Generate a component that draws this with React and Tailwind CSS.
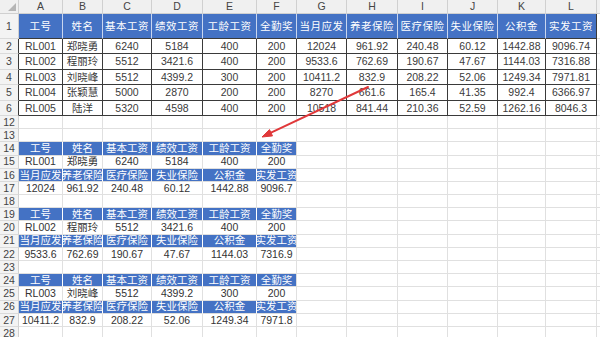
const COLS = ["A", "B", "C", "D", "E", "F", "G", "H", "I", "J", "K", "L"];

const HEAD1 = ["工号", "姓名", "基本工资", "绩效工资", "工龄工资", "全勤奖"];
const HEAD2 = ["当月应发", "养老保险", "医疗保险", "失业保险", "公积金", "实发工资"];

const TOP = [
  ["RL001", "郑晓勇", "6240", "5184", "400", "200", "12024", "961.92", "240.48", "60.12", "1442.88", "9096.74"],
  ["RL002", "程丽玲", "5512", "3421.6", "400", "200", "9533.6", "762.69", "190.67", "47.67", "1144.03", "7316.88"],
  ["RL003", "刘晓峰", "5512", "4399.2", "300", "200", "10411.2", "832.9", "208.22", "52.06", "1249.34", "7971.81"],
  ["RL004", "张颖慧", "5000", "2870", "200", "200", "8270", "661.6", "165.4", "41.35", "992.4", "6366.97"],
  ["RL005", "陆洋", "5320", "4598", "400", "200", "10518", "841.44", "210.36", "52.59", "1262.16", "8046.3"],
];

const SLIPS = [
  { a: ["RL001", "郑晓勇", "6240", "5184", "400", "200"], b: ["12024", "961.92", "240.48", "60.12", "1442.88", "9096.7"] },
  { a: ["RL002", "程丽玲", "5512", "3421.6", "400", "200"], b: ["9533.6", "762.69", "190.67", "47.67", "1144.03", "7316.9"] },
  { a: ["RL003", "刘晓峰", "5512", "4399.2", "300", "200"], b: ["10411.2", "832.9", "208.22", "52.06", "1249.34", "7971.8"] },
];

// build the sheet rows
const rows = [];
rows.push({ num: "1", kind: "head", cells: [...HEAD1, ...HEAD2] });
TOP.forEach((r, i) => rows.push({ num: String(i + 2), kind: "data", cells: r }));
rows.push({ num: "12", kind: "blank", cells: [] });
rows.push({ num: "13", kind: "blank", cells: [] });
let n = 14;
SLIPS.forEach((s) => {
  rows.push({ num: String(n++), kind: "bhead", cells: HEAD1 });
  rows.push({ num: String(n++), kind: "bdata", cells: s.a });
  rows.push({ num: String(n++), kind: "bhead", cells: HEAD2 });
  rows.push({ num: String(n++), kind: "bdata", cells: s.b });
  rows.push({ num: String(n++), kind: "blank", cells: [] });
});

const base = "flex items-center justify-center overflow-hidden whitespace-nowrap";

function cellClass(kind, ci, has) {
  if (kind === "head") {
    return ci === 11
      ? "bg-[#4472c4] text-white tracking-[0.5px] border-r border-b border-[#3a3a3a]"
      : "bg-[#4472c4] text-white tracking-[0.5px] border-r border-b border-r-[#c9d6ef] border-b-[#3a3a3a]";
  }
  if (kind === "data") return "bg-white text-[#3a3a3a] border-r border-b border-[#3a3a3a]";
  if (kind === "bhead" && has) {
    return ci === 5
      ? "bg-[#4472c4] text-white border-r border-b border-[#dcdcdc]"
      : "bg-[#4472c4] text-white border-r border-b border-r-white border-b-[#dcdcdc]";
  }
  return "bg-white text-[#333] border-r border-b border-[#e0e0e0]";
}

function Corner() {
  return (
    <div className="bg-[#f0f0f0] border-r border-b border-[#d0d0d0] flex items-end justify-end p-[2px]">
      <svg width="8" height="8" viewBox="0 0 8 8">
        <polygon points="8,0 8,8 0,8" fill="#b5b5b5" />
      </svg>
    </div>
  );
}

export default function App() {
  return (
    <div
      className="relative w-[600px] h-[337px] overflow-hidden bg-white text-[10.5px] leading-none"
      style={{ fontFamily: '"Liberation Sans", "Noto Sans CJK SC", sans-serif' }}
    >
      <div className="grid grid-cols-[19px_44px_40px_49px_51px_54px_40px_50px_51px_50px_50px_48px_51px_1fr] grid-rows-[14px_25px_repeat(5,15.4px)_repeat(17,13.2px)]">
        <Corner />
        {COLS.map((c) => (
          <div key={c} className={`${base} bg-[#f0f0f0] text-[#444] border-r border-b border-[#d0d0d0]`}>
            {c}
          </div>
        ))}
        <div className="bg-[#f0f0f0] border-b border-[#d0d0d0]" />

        {rows.map((r) => (
          <div key={r.num} className="contents">
            <div
              className={`${base} bg-[#f3f3f3] text-[#444] border-b border-[#dadada] border-r ${
                r.kind === "data" ? "border-r-[#3a3a3a]" : "border-r-[#d0d0d0]"
              }`}
            >
              {r.num}
            </div>
            {COLS.map((c, ci) => {
              const v = r.cells[ci];
              return (
                <div key={c} className={`${base} ${cellClass(r.kind, ci, v !== undefined)}`}>
                  {v}
                </div>
              );
            })}
            <div className="bg-white border-b border-[#e0e0e0]" />
          </div>
        ))}
      </div>

      <svg className="absolute left-0 top-0 pointer-events-none" width="600" height="337">
        <line x1="368" y1="87" x2="271" y2="132.7" stroke="#e0383a" strokeWidth="2" strokeLinecap="round" />
        <polygon points="262,137 272.5,135.9 269.5,129.6" fill="#e0383a" stroke="#e0383a" strokeWidth="1" strokeLinejoin="round" />
      </svg>
    </div>
  );
}
